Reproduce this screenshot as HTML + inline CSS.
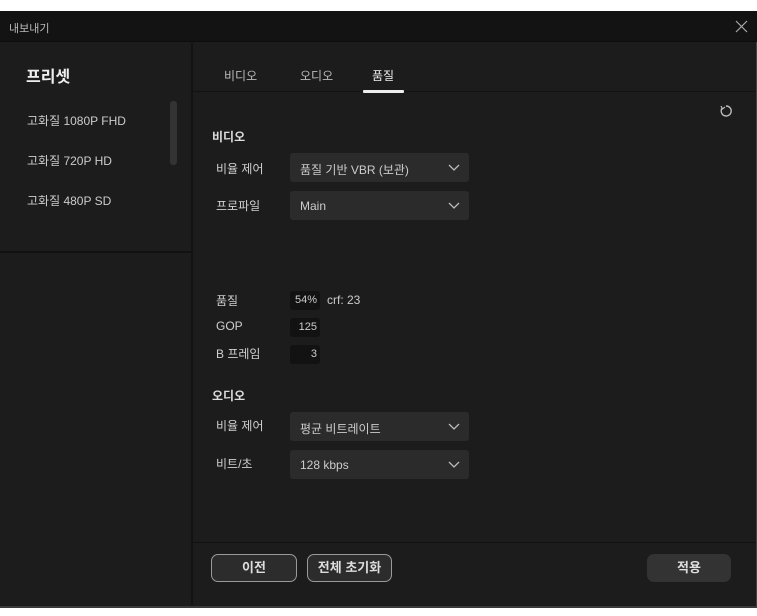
<!DOCTYPE html>
<html><head><meta charset="utf-8"><style>
*{margin:0;padding:0;box-sizing:border-box}
body{width:757px;height:616px;background:#fff;position:relative;overflow:hidden;font-family:"Liberation Sans","Noto Sans CJK KR",sans-serif;color:#d0d0d0}
.a{position:absolute}
#win{left:0;top:11px;width:757px;height:597px;background:#1c1c1c;border-right:1px solid #444;border-bottom:2px solid #3a3a3a}
.t{font-size:12px;white-space:nowrap}
.dd{position:absolute;left:290px;width:179px;height:29px;background:#2b2b2b;border-radius:3px;font-size:12px;color:#ccc;padding:8px 0 0 10px}
.dd svg{position:absolute;right:9px;top:11px}
.in{position:absolute;left:290px;width:30px;height:19px;background:#121212;border-radius:3px;font-size:11px;text-align:right;padding:3px 3px 0 0;color:#ccc}
.btn{position:absolute;top:554px;height:28px;border:1.5px solid #9a9a9a;border-radius:7px;background:#2c2c2c;font-size:13px;font-weight:bold;color:#ddd;text-align:center;line-height:25px}
</style></head><body>
<div id="win" class="a">
 <div class="a" style="left:0;top:0;width:757px;height:31px;background:#131313;border-bottom:1px solid #0c0c0c"></div>
 <div class="a t" style="left:9px;top:9px;font-size:11px;color:#bbb">내보내기</div>
 <svg class="a" style="left:735px;top:9px" width="13" height="13"><path d="M1 1L12 12M12 1L1 12" stroke="#aaa" stroke-width="1.2"/></svg>
 <div class="a" style="left:191px;top:32px;width:2px;height:562px;background:#121212"></div>
 <div class="a" style="left:0;top:240px;width:191px;height:2px;background:#121212"></div>
 <div class="a t" style="left:26px;top:52px;font-size:16px;font-weight:bold;color:#eee">프리셋</div>
 <div class="a" style="left:170px;top:90px;width:7px;height:64px;background:#333;border-radius:3px"></div>
 <div class="a t" style="left:27px;top:101px;color:#ccc">고화질 1080P FHD</div>
 <div class="a t" style="left:27px;top:141px;color:#ccc">고화질 720P HD</div>
 <div class="a t" style="left:27px;top:181px;color:#ccc">고화질 480P SD</div>
 <div class="a" style="left:193px;top:80px;width:563px;height:1px;background:#131313"></div>
 <div class="a t" style="left:224px;top:56px;color:#bbb">비디오</div>
 <div class="a t" style="left:300px;top:56px;color:#bbb">오디오</div>
 <div class="a t" style="left:372px;top:56px;color:#eee">품질</div>
 <div class="a" style="left:363px;top:79px;width:41px;height:3px;background:#eee;border-radius:1px"></div>
 <svg class="a" style="left:719px;top:93px" width="14" height="14"><path d="M3.2 4A5 5 0 1 0 7 2" fill="none" stroke="#bbb" stroke-width="1.4"/><path d="M2 2L3.5 5L6 3" fill="none" stroke="#bbb" stroke-width="1.2"/></svg>
 <div class="a t" style="left:212px;top:117px;font-weight:bold;color:#ddd">비디오</div>
 <div class="a" style="left:193px;top:531px;width:563px;height:1px;background:#111"></div>
</div>
<div class="a t" style="left:216px;top:160px">비율 제어</div>
<div class="dd" style="top:153px">품질 기반 VBR (보관)<svg width="12" height="7"><path d="M1 1L6 6L11 1" fill="none" stroke="#bbb" stroke-width="1.3"/></svg></div>
<div class="a t" style="left:216px;top:197px">프로파일</div>
<div class="dd" style="top:191px">Main<svg width="12" height="7"><path d="M1 1L6 6L11 1" fill="none" stroke="#bbb" stroke-width="1.3"/></svg></div>
<div class="a t" style="left:216px;top:292px">품질</div>
<div class="in" style="top:291px">54%</div>
<div class="a t" style="left:327px;top:293px;color:#ccc">crf: 23</div>
<div class="a t" style="left:216px;top:319px">GOP</div>
<div class="in" style="top:318px">125</div>
<div class="a t" style="left:216px;top:345px">B 프레임</div>
<div class="in" style="top:345px">3</div>
<div class="a t" style="left:212px;top:387px;font-weight:bold;color:#ddd">오디오</div>
<div class="a t" style="left:216px;top:417px">비율 제어</div>
<div class="dd" style="top:412px">평균 비트레이트<svg width="12" height="7"><path d="M1 1L6 6L11 1" fill="none" stroke="#bbb" stroke-width="1.3"/></svg></div>
<div class="a t" style="left:216px;top:455px">비트/초</div>
<div class="dd" style="top:450px">128 kbps<svg width="12" height="7"><path d="M1 1L6 6L11 1" fill="none" stroke="#bbb" stroke-width="1.3"/></svg></div>
<div class="btn" style="left:211px;width:86px">이전</div>
<div class="btn" style="left:307px;width:85px">전체 초기화</div>
<div class="btn" style="left:647px;width:84px;border:none;background:#333;line-height:28px">적용</div>
</body></html>
